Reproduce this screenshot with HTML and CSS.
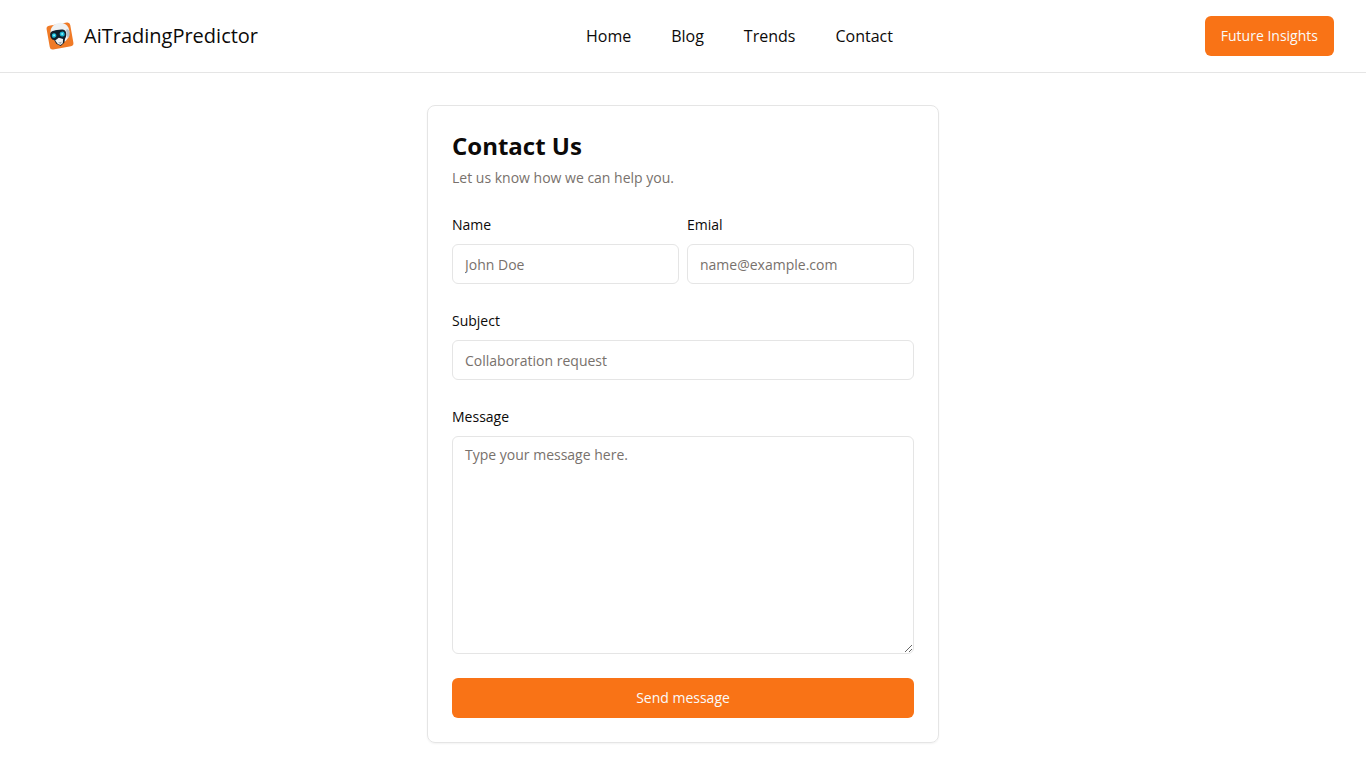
FILE: index.html
```html
<!DOCTYPE html>
<html lang="en">
<head>
    <meta charset="UTF-8">
    <meta name="viewport" content="width=device-width, initial-scale=1.0">
    <title>Contact - AiTradingPredictor</title>
    <link rel="stylesheet" href="styles.css">
</head>
<body>
    <header class="site-header">
        <a href="#" class="brand">
            <svg class="brand-logo" viewBox="0 0 32 32" aria-hidden="true">
                <g transform="rotate(-10 16 16)">
                    <rect x="4" y="4" width="24" height="24" rx="3" fill="#f07a26"/>
                    <path d="M7 13C7 7 11 3 17 3c6 0 9.500 4.500 9 10l-2 6-3.500 3H12l-3-4z" fill="#eef1f3"/>
                    <path d="M23 11c2-1 3 0 3 3s-1 5-3 5z" fill="#b4bfc7"/>
                    <path d="M6.500 13c.5-3 3-3.500 7.500-3.500s8 .5 8.500 3.500c.3 3-.5 5-2 6.500L19 23.500 15 26l-4-3-1.500-4c-2-.5-3.500-3-3-6z" fill="#10202c"/>
                    <path d="M10.500 19.500l4-2 4 2-1 4-2.500 1.500-2.500-1.500z" fill="#eef1f3"/>
                    <path d="M13 22h4l-2 2z" fill="#9aa6ae"/>
                    <circle cx="10.300" cy="14.500" r="2.300" fill="#19b5d3"/>
                    <circle cx="18.500" cy="14.500" r="2.500" fill="#19b5d3"/>
                    <circle cx="10.300" cy="14.300" r="1" fill="#8df3fa"/>
                    <circle cx="18.500" cy="14.300" r="1" fill="#8df3fa"/>
                </g>
            </svg>
            <span>AiTradingPredictor</span>
        </a>
        <nav class="site-nav">
            <a href="#">Home</a>
            <a href="#">Blog</a>
            <a href="#">Trends</a>
            <a href="#">Contact</a>
        </nav>
        <button type="button" class="btn">Future Insights</button>
    </header>

    <main>
        <section class="card">
            <h1>Contact Us</h1>
            <p class="card-text">Let us know how we can help you.</p>

            <form class="contact-form">
                <div class="form-row">
                    <div class="field">
                        <label for="name">Name</label>
                        <input type="text" id="name" placeholder="John Doe">
                    </div>
                    <div class="field">
                        <label for="email">Emial</label>
                        <input type="email" id="email" placeholder="name@example.com">
                    </div>
                </div>
                <div class="field">
                    <label for="subject">Subject</label>
                    <input type="text" id="subject" placeholder="Collaboration request">
                </div>
                <div class="field">
                    <label for="message">Message</label>
                    <textarea id="message" rows="10" placeholder="Type your message here."></textarea>
                </div>
                <button type="submit" class="btn">Send message</button>
            </form>
        </section>
    </main>
</body>
</html>
```

FILE: styles.css
```css
:root {
    --primary: #f97316;
    --primary-text: #fafaf9;
    --dark: #0c0a09;
    --muted: #78716c;
    --border: #e5e5e5;
}
* {
    box-sizing: border-box;
    margin: 0;
    padding: 0;
}
body {
    background: white;
    color: var(--dark);
    font-family: "Open Sans", "Noto Sans", sans-serif;
    font-size: 16px;
    line-height: 24px;
}
a {
    color: inherit;
    text-decoration: none;
}

/* Header */
.site-header {
    display: flex;
    flex-wrap: wrap;
    align-items: center;
    justify-content: space-between;
    gap: 16px;
    padding: 16px 32px;
    border-bottom: 1px solid var(--border);
}
.brand {
    display: flex;
    align-items: center;
    gap: 8px;
    padding: 0 16px 0 12px;
    font-size: 20px;
    line-height: 28px;
}
.brand-logo {
    width: 32px;
    height: 32px;
}
.site-nav {
    display: flex;
    gap: 40px;
}
.btn {
    height: 40px;
    padding: 0 16px;
    border: none;
    border-radius: 6px;
    background: var(--primary);
    color: var(--primary-text);
    font-family: inherit;
    font-size: 14px;
    line-height: 20px;
    cursor: pointer;
}
.btn:hover {
    background: #fa812d;
}

/* Contact card */
main {
    padding: 32px 16px 24px;
}
.card {
    max-width: 512px;
    margin: 0 auto;
    padding: 24px;
    border: 1px solid var(--border);
    border-radius: 8px;
    box-shadow: 0 1px 2px rgba(0,0,0,0.05);
}
h1 {
    font-size: 24px;
    line-height: 32px;
    font-weight: bold;
}
.card-text {
    margin-top: 6px;
    color: var(--muted);
    font-size: 14px;
    line-height: 20px;
}
.contact-form {
    display: flex;
    flex-direction: column;
    gap: 24px;
    margin-top: 24px;
}
.form-row {
    display: grid;
    grid-template-columns: 1fr 1fr;
    gap: 8px;
}
.field {
    display: flex;
    flex-direction: column;
    gap: 6px;
}
.field label {
    font-size: 14px;
    line-height: 26px;
}
.field input,
.field textarea {
    width: 100%;
    padding: 8px 12px;
    border: 1px solid var(--border);
    border-radius: 6px;
    background: white;
    color: var(--dark);
    font-family: inherit;
    font-size: 14px;
    line-height: 20px;
}
.field input {
    height: 40px;
}
.field textarea {
    resize: vertical;
}
.field input::placeholder,
.field textarea::placeholder {
    color: var(--muted);
}
.field input:focus,
.field textarea:focus {
    outline: 2px solid var(--primary);
    outline-offset: 2px;
}
@media (max-width: 480px) {
    .form-row {
        grid-template-columns: 1fr;
    }
}
```
